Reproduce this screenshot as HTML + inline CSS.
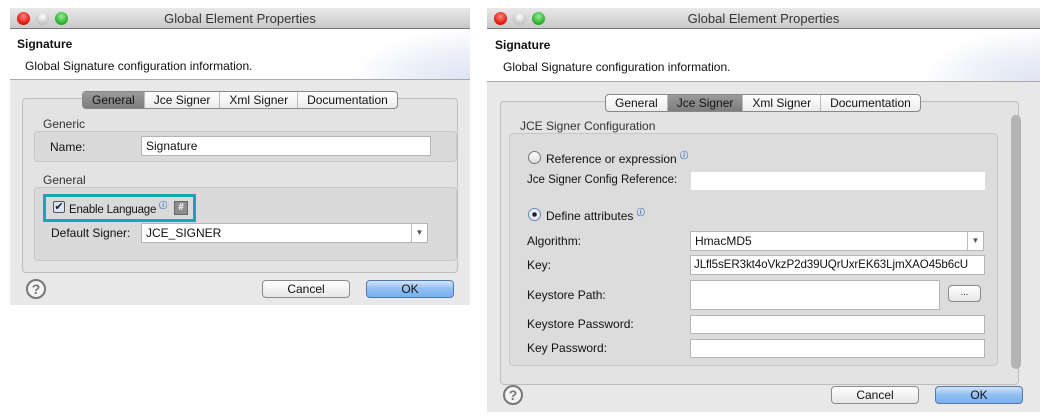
<!DOCTYPE html>
<html><head><meta charset="utf-8"><style>
*{box-sizing:border-box;margin:0;padding:0}
body{width:1044px;height:420px;background:#fff;position:relative;overflow:hidden;font-family:"Liberation Sans",sans-serif;font-size:12px;color:#111}
.a{position:absolute}
.win{position:absolute;background:#e8e8e8;}
.tb{position:absolute;left:0;right:0;top:0;height:21px;background:linear-gradient(#e9e9e9,#c9c9c9);border-bottom:1px solid #777;text-align:center;font-size:13px;line-height:21px;color:#333}
.dot{position:absolute;top:4px;width:13px;height:13px;border-radius:50%}
.hd{position:absolute;left:0;right:0;top:21px;background:#fff;border-bottom:1px solid #aaa}
.hd::after{content:"";position:absolute;right:0;top:0;width:120px;height:100%;background:radial-gradient(ellipse at 100% 100%,#dde4f2 0,#eef1f8 40%,rgba(255,255,255,0) 70%)}
.grp{position:absolute;border:1px solid #bdbdbd;border-radius:4px;background:#e3e3e3}
.in{position:absolute;border:1px solid #c8c8c8;border-radius:4px;background:#dadada}
.fld{position:absolute;background:#fff;border:1px solid #b5b5b5;height:20px;padding-left:4px;line-height:18px;font-size:12px;white-space:nowrap;overflow:hidden}
.tabs{position:absolute;height:18px;border:1px solid #888;border-radius:4px;background:linear-gradient(#fff,#ececec);display:flex;overflow:hidden}
.tabs div{padding:0 9px;line-height:16px;border-left:1px solid #bbb;font-size:12px}
.tabs div:first-child{border-left:none}
.tabs .sel{background:linear-gradient(#9a9a9a,#7d7d7d);color:#111}
.btn{position:absolute;height:18px;border:1px solid #8a8a8a;border-radius:4px;background:linear-gradient(#fff,#e6e6e6);text-align:center;line-height:16px;font-size:12px}
.ok{background:linear-gradient(#d3e5fb,#8fbef3 50%,#79b0ef);border-color:#5577aa}
.help{position:absolute;width:20px;height:20px;border-radius:50%;border:2px solid #777;text-align:center;font-weight:bold;font-size:14px;line-height:16px;color:#777;background:#f4f4f4}
.i{font-size:8px;color:#3a76c4;vertical-align:super;font-weight:bold}
.dd{position:absolute;right:0;top:0;width:16px;height:18px;border-left:1px solid #bbb;font-size:8px;text-align:center;line-height:18px;color:#555;background:#fff}
</style></head><body>

<!-- LEFT WINDOW -->
<div class="win" style="left:10px;top:8px;width:460px;height:297px">
 <div class="tb">Global Element Properties
  <div class="dot" style="left:7px;background:radial-gradient(circle at 50% 35%,#f88,#d10 70%)"></div>
  <div class="dot" style="left:26px;background:radial-gradient(circle at 50% 35%,#fff,#bbb 80%)"></div>
  <div class="dot" style="left:45px;background:radial-gradient(circle at 50% 35%,#9e9,#2a2 70%)"></div>
 </div>
 <div class="hd" style="height:51px">
  <div class="a" style="left:7px;top:8px;font-weight:bold;font-size:12px">Signature</div>
  <div class="a" style="left:15px;top:30px">Global Signature configuration information.</div>
 </div>
 <div class="grp" style="left:12px;top:90px;width:436px;height:175px"></div>
 <div class="tabs" style="left:72px;top:83px"><div class="sel">General</div><div>Jce Signer</div><div>Xml Signer</div><div>Documentation</div></div>
 <div class="a" style="left:33px;top:109px;color:#333">Generic</div>
 <div class="in" style="left:24px;top:123px;width:423px;height:31px"></div>
 <div class="a" style="left:40px;top:132px">Name:</div>
 <div class="fld" style="left:131px;top:128px;width:290px">Signature</div>
 <div class="a" style="left:33px;top:165px;color:#333">General</div>
 <div class="in" style="left:24px;top:179px;width:423px;height:74px"></div>
 <div class="a" style="left:33px;top:186px;width:153px;height:28px;border:3px solid #13a7b8"></div>
 <div class="a" style="left:43px;top:193px;width:12px;height:12px;border:1px solid #555;border-radius:2px;background:#dbe6f5;font-size:11px;line-height:10px;text-align:center;color:#123">✔</div>
 <div class="a" style="left:59px;top:192px;font-size:11.5px;letter-spacing:-0.2px">Enable Language <span class="i">ⓘ</span></div>
 <div class="a" style="left:164px;top:193px;width:14px;height:14px;background:#8c8c8c;border:1px solid #666;color:#fff;font-size:10px;line-height:12px;text-align:center;font-weight:bold">#</div>
 <div class="a" style="left:41px;top:218px">Default Signer:</div>
 <div class="fld" style="left:131px;top:215px;width:287px">JCE_SIGNER<div class="dd">▼</div></div>
 <div class="help" style="left:16px;top:271px">?</div>
 <div class="btn" style="left:252px;top:272px;width:88px">Cancel</div>
 <div class="btn ok" style="left:356px;top:272px;width:88px">OK</div>
</div>

<!-- RIGHT WINDOW -->
<div class="win" style="left:487px;top:8px;width:553px;height:404px">
 <div class="tb">Global Element Properties
  <div class="dot" style="left:7px;background:radial-gradient(circle at 50% 35%,#f88,#d10 70%)"></div>
  <div class="dot" style="left:26px;background:radial-gradient(circle at 50% 35%,#fff,#bbb 80%)"></div>
  <div class="dot" style="left:45px;background:radial-gradient(circle at 50% 35%,#9e9,#2a2 70%)"></div>
 </div>
 <div class="hd" style="height:53px">
  <div class="a" style="left:8px;top:9px;font-weight:bold;font-size:12px">Signature</div>
  <div class="a" style="left:16px;top:31px">Global Signature configuration information.</div>
 </div>
 <div class="grp" style="left:13px;top:93px;width:519px;height:284px"></div>
 <div class="tabs" style="left:118px;top:86px"><div>General</div><div class="sel">Jce Signer</div><div>Xml Signer</div><div>Documentation</div></div>
 <div class="a" style="left:524px;top:107px;width:10px;height:254px;border-radius:5px;background:#b4b4b4"></div>
 <div class="a" style="left:33px;top:111px;color:#333">JCE Signer Configuration</div>
 <div class="in" style="left:22px;top:125px;width:489px;height:233px;background:#dcdcdc"></div>
 <div class="a" style="left:41px;top:143px;width:13px;height:13px;border-radius:50%;border:1px solid #777;background:linear-gradient(#fff,#ddd)"></div>
 <div class="a" style="left:59px;top:142px">Reference or expression <span class="i">ⓘ</span></div>
 <div class="a" style="left:40px;top:166px;font-size:11.5px">Jce Signer Config Reference:</div>
 <div class="a" style="left:204px;top:164px;width:294px;height:18px;background:#fff"></div>
 <div class="a" style="left:41px;top:200px;width:13px;height:13px;border-radius:50%;border:1px solid #6a86b5;background:radial-gradient(circle,#222 0 2px,#e3ecf8 2.5px)"></div>
 <div class="a" style="left:59px;top:199px">Define attributes <span class="i">ⓘ</span></div>
 <div class="a" style="left:40px;top:226px">Algorithm:</div>
 <div class="fld" style="left:203px;top:223px;width:294px">HmacMD5<div class="dd">▼</div></div>
 <div class="a" style="left:40px;top:250px">Key:</div>
 <div class="fld" style="left:203px;top:247px;width:295px;padding-left:3px;font-size:11.6px;letter-spacing:-0.1px">JLfl5sER3kt4oVkzP2d39UQrUxrEK63LjmXAO45b6cU</div>
 <div class="a" style="left:40px;top:280px">Keystore Path:</div>
 <div class="fld" style="left:203px;top:272px;width:250px;height:30px"></div>
 <div class="btn" style="left:461px;top:277px;width:33px;height:17px;font-size:9px;line-height:12px">...</div>
 <div class="a" style="left:40px;top:309px">Keystore Password:</div>
 <div class="fld" style="left:203px;top:307px;width:295px;height:19px"></div>
 <div class="a" style="left:40px;top:333px">Key Password:</div>
 <div class="fld" style="left:203px;top:331px;width:295px;height:19px"></div>
 <div class="help" style="left:16px;top:377px">?</div>
 <div class="btn" style="left:344px;top:378px;width:88px">Cancel</div>
 <div class="btn ok" style="left:448px;top:378px;width:88px">OK</div>
</div>
</body></html>
